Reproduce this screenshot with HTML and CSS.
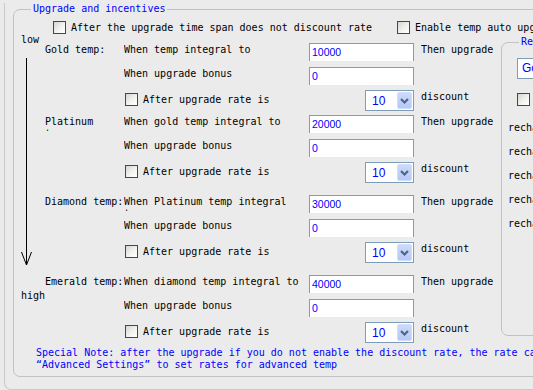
FILE: index.html
```html
<!DOCTYPE html>
<html lang="en">
<head>
  <meta charset="UTF-8">
  <title>Upgrade and incentives</title>
  <link rel="stylesheet" href="styles.css">
</head>
<body>
  <div class="outer">
    <fieldset class="box incentives">
      <legend>Upgrade and incentives</legend>

      <div class="top-row">
        <label class="check"><span class="cb"></span>After the upgrade time span does not discount rate</label>
        <label class="check"><span class="cb"></span>Enable temp auto upgrade</label>
      </div>

      <div class="main">
        <!-- low -> high scale -->
        <div class="scale">
          <div class="scale-low">low</div>
          <svg class="arrow" width="11" height="208" viewBox="0 0 11 208">
            <path d="M5.5 0V207M0.5 194L5.5 207L10.5 194" fill="none" stroke="#000" stroke-width="1"/>
          </svg>
          <div class="scale-high">high</div>
        </div>

        <div class="tiers">
          <div class="tier">
            <div class="cell tier-name">Gold temp:</div>
            <div class="cell when">When temp integral to</div>
            <input class="field" value="10000">
            <div class="cell after">Then upgrade</div>
            <div class="cell when">When upgrade bonus</div>
            <input class="field" value="0">
            <label class="check check-rate"><span class="cb"></span>After upgrade rate is</label>
            <div class="combo"><span class="combo-value">10</span><span class="combo-btn"><svg width="9" height="6" viewBox="0 0 9 6"><path d="M1 1L4.5 4.5L8 1" fill="none" stroke="#4d6185" stroke-width="2"/></svg></span></div>
            <div class="cell after">discount</div>
          </div>

          <div class="tier tier-close">
            <div class="cell tier-name">Platinum temp:</div>
            <div class="cell when">When gold temp integral to</div>
            <input class="field" value="20000">
            <div class="cell after">Then upgrade</div>
            <div class="cell when">When upgrade bonus</div>
            <input class="field" value="0">
            <label class="check check-rate"><span class="cb"></span>After upgrade rate is</label>
            <div class="combo"><span class="combo-value">10</span><span class="combo-btn"><svg width="9" height="6" viewBox="0 0 9 6"><path d="M1 1L4.5 4.5L8 1" fill="none" stroke="#4d6185" stroke-width="2"/></svg></span></div>
            <div class="cell after">discount</div>
          </div>

          <div class="tier">
            <div class="cell tier-name">Diamond temp:</div>
            <div class="cell when">When Platinum temp integral to</div>
            <input class="field" value="30000">
            <div class="cell after">Then upgrade</div>
            <div class="cell when">When upgrade bonus</div>
            <input class="field" value="0">
            <label class="check check-rate"><span class="cb"></span>After upgrade rate is</label>
            <div class="combo"><span class="combo-value">10</span><span class="combo-btn"><svg width="9" height="6" viewBox="0 0 9 6"><path d="M1 1L4.5 4.5L8 1" fill="none" stroke="#4d6185" stroke-width="2"/></svg></span></div>
            <div class="cell after">discount</div>
          </div>

          <div class="tier">
            <div class="cell tier-name">Emerald temp:</div>
            <div class="cell when">When diamond temp integral to</div>
            <input class="field" value="40000">
            <div class="cell after">Then upgrade</div>
            <div class="cell when">When upgrade bonus</div>
            <input class="field" value="0">
            <label class="check check-rate"><span class="cb"></span>After upgrade rate is</label>
            <div class="combo"><span class="combo-value">10</span><span class="combo-btn"><svg width="9" height="6" viewBox="0 0 9 6"><path d="M1 1L4.5 4.5L8 1" fill="none" stroke="#4d6185" stroke-width="2"/></svg></span></div>
            <div class="cell after">discount</div>
          </div>
        </div>

        <fieldset class="box rank">
          <legend>Recharge upgrade</legend>
          <div class="rank-combo">Gold temp</div>
          <label class="check rank-check"><span class="cb"></span>Enable recharge upgrade</label>
          <div class="rank-list">
            <div>recharge 100 to Gold temp</div>
            <div>recharge 200 to Platinum temp</div>
            <div>recharge 300 to Diamond temp</div>
            <div>recharge 400 to Emerald temp</div>
            <div>recharge 500 to Emerald temp</div>
          </div>
        </fieldset>
      </div>

      <div class="note">
        <div>Special Note: after the upgrade if you do not enable the discount rate, the rate can be set in the</div>
        <div>“Advanced Settings” to set rates for advanced temp</div>
      </div>
    </fieldset>
  </div>
</body>
</html>
```

FILE: styles.css
```css
* {
  box-sizing: border-box;
}

body {
  margin: 0;
  width: 533px;
  height: 390px;
  overflow: hidden;
  background-color: #ebebeb;
  color: #000000;
  font-family: 'DejaVu Sans Mono', monospace;
  font-size: 10px;
  line-height: 12px;
}

.outer {
  margin-left: 4px;
  width: 640px;
  height: 387px;
  padding-left: 8px;
  border-left: 1px solid #c9c9c9;
  border-bottom: 1px solid #c9c9c9;
  border-bottom-left-radius: 7px;
}

/* group boxes */
.box {
  margin: 0;
  padding: 0;
  min-width: 0;
  border: 1px solid #c2c2c2;
  border-radius: 7px;
}

.box legend {
  margin-left: 17px;
  padding: 0 2px;
  color: #0000ff;
  line-height: 12px;
}

.incentives {
  margin-top: 3px;
  width: 620px;
  height: 374px;
}

/* checkboxes */
.check {
  display: flex;
  align-items: center;
  gap: 5px;
  height: 13px;
  white-space: nowrap;
}

.cb {
  flex: none;
  width: 13px;
  height: 13px;
  border: 1px solid #1c5180;
  background: linear-gradient(135deg, #d6d6d0 0%, #f4f4f2 60%, #ffffff 100%);
}

.top-row {
  display: grid;
  grid-template-columns: 344px auto;
  padding: 6px 0 0 39px;
}

.main {
  display: flex;
  height: 312px;
}

/* low / high arrow */
.scale {
  flex: none;
  width: 31px;
  padding-left: 7px;
}

.arrow {
  display: block;
  margin-top: 12px;
}

.scale-high {
  margin-top: 24px;
}

/* tiers */
.tiers {
  flex: none;
  width: 456px;
  padding-top: 9px;
}

.tier {
  display: grid;
  grid-template-columns: 79px 185px 105px 1fr;
  grid-template-rows: 24px 23px 21px;
  margin-top: 12px;
}

.tier:first-child {
  margin-top: 0;
}

.tier.tier-close {
  margin-top: 4px;
}

.cell {
  height: 16px;
  padding-top: 1px;
  overflow: hidden;
}

.tier-name {
  grid-column: 1;
}

.when {
  grid-column: 2;
  width: 177px;
}

.after {
  grid-column: 4;
  padding-left: 7px;
  white-space: nowrap;
}

.field {
  grid-column: 3;
  width: 105px;
  height: 18px;
  margin: 0;
  padding: 0 2px 1px;
  border: 1px solid #7f9db9;
  border-bottom: 0;
  background: #ffffff;
  color: #0000ff;
  font-family: 'Liberation Sans', Arial, sans-serif;
  font-size: 10.5px;
  outline: none;
}

.check-rate {
  grid-column: 2;
  margin: 3px 0 0 1px;
}

.combo {
  grid-column: 3;
  justify-self: end;
  display: flex;
  align-items: center;
  width: 49px;
  height: 21px;
  padding: 1px;
  border: 1px solid #7f9db9;
  background: #ffffff;
}

.combo-value {
  padding-left: 5px;
  color: #0000ff;
  font-family: 'Liberation Sans', Arial, sans-serif;
  font-size: 12px;
}

.combo-btn {
  display: flex;
  align-items: center;
  justify-content: center;
  width: 15px;
  height: 17px;
  margin-left: auto;
  border: 1px solid #d2ddf9;
  border-radius: 2px;
  background: linear-gradient(#cbd9fa, #b6c9f6);
}

/* right group box */
.rank {
  flex: none;
  width: 130px;
  height: 300px;
  margin-top: 2px;
}

.rank-combo {
  width: 112px;
  height: 21px;
  margin: 10px 0 0 15px;
  padding-left: 4px;
  border: 1px solid #7f9db9;
  background: #ffffff;
  color: #0000ff;
  font-family: 'Liberation Sans', Arial, sans-serif;
  font-size: 12px;
  line-height: 19px;
  white-space: nowrap;
}

.rank-check {
  margin: 14px 0 0 15px;
}

.rank-list {
  margin-top: 16px;
  padding-left: 6px;
  white-space: nowrap;
}

.rank-list div {
  height: 24px;
}

/* bottom note */
.note {
  margin-top: 1px;
  padding-left: 22px;
  color: #0000ff;
  white-space: nowrap;
}
```
